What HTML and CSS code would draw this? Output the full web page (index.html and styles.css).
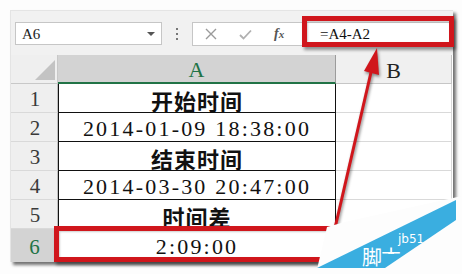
FILE: index.html
```html
<!DOCTYPE html>
<html lang="zh-CN">
<head>
    <meta charset="UTF-8">
    <meta name="viewport" content="width=device-width, initial-scale=1.0">
    <title>时间差 - Excel</title>
    <link rel="stylesheet" href="styles.css">
</head>
<body>
    <div class="page">
        <div class="sheet">
            <div class="toolbar">
                <div class="namebox">
                    <span>A6</span>
                    <i class="caret"></i>
                </div>
                <div class="grip"><i></i><i></i><i></i></div>
                <div class="fbar">
                    <span class="ico">
                        <svg width="12" height="12" viewBox="0 0 12 12"><path d="M1 1 L11 11 M11 1 L1 11" stroke="#9a9a9a" stroke-width="1.4" fill="none"/></svg>
                    </span>
                    <span class="ico">
                        <svg width="13" height="11" viewBox="0 0 13 11"><path d="M1 6 L4.5 9.5 L12 1.5" stroke="#b0b0b0" stroke-width="1.8" fill="none"/></svg>
                    </span>
                    <span class="fx">f<span>x</span></span>
                    <div class="formula">=A4-A2</div>
                </div>
            </div>

            <div class="grid">
                <div class="corner"><i></i></div>
                <div class="colhead sel">A</div>
                <div class="colhead">B</div>

                <div class="rowhead">1</div>
                <div class="cell cjk">开始时间</div>
                <div class="blank"></div>

                <div class="rowhead">2</div>
                <div class="cell num">2014-01-09 18:38:00</div>
                <div class="blank"></div>

                <div class="rowhead">3</div>
                <div class="cell cjk">结束时间</div>
                <div class="blank"></div>

                <div class="rowhead">4</div>
                <div class="cell num">2014-03-30 20:47:00</div>
                <div class="blank"></div>

                <div class="rowhead">5</div>
                <div class="cell cjk">时间差</div>
                <div class="blank"></div>

                <div class="rowhead sel last">6</div>
                <div class="cell num last">2:09:00</div>
                <div class="blank last"></div>
            </div>
        </div>

        <!-- annotations drawn on top of the screenshot -->
        <div class="mark mark-formula"></div>
        <div class="mark mark-row"></div>
        <svg class="arrow" width="462" height="274" viewBox="0 0 462 274">
            <line x1="335" y1="228" x2="372" y2="68" stroke="#d0161c" stroke-width="3"/>
            <polygon points="377,48 364,71 379,75" fill="#d0161c"/>
        </svg>
        <svg class="stamp" width="462" height="274" viewBox="0 0 462 274">
            <defs>
                <clipPath id="band">
                    <polygon points="317,268 456,200 456,220 385,268"/>
                </clipPath>
                <clipPath id="cut">
                    <rect x="380" y="230" width="30" height="24"/>
                </clipPath>
            </defs>
            <polygon points="316,274 318,265 327,227 345,222 462,196 462,274" fill="#fdfdfd"/>
            <polygon points="317,268 456,200 456,220 385,268" fill="#3aaee0"/>
            <g clip-path="url(#band)" fill="#ffffff">
                <text x="398" y="243" class="stamp-en">jb51</text>
                <text x="362" y="265" class="stamp-cn">脚</text>
                <text x="381" y="265" class="stamp-cn" clip-path="url(#cut)">本</text>
            </g>
        </svg>
    </div>
</body>
</html>
```

FILE: styles.css
```css
:root {
    --toolbar-bg: #f1f1f1;
    --head-bg: #efefef;
    --head-sel: #d3d3d3;
    --excel-green: #217346;
    --grid-line: #d9d9d9;
    --mark-red: #d0161c;
}
body {
    margin: 0;
    background: #fdfdfd;
}
.page {
    position: relative;
    width: 462px;
    height: 274px;
    padding: 10px 10px 0 10px;
    box-sizing: border-box;
    overflow: hidden;
}
.sheet {
    width: 442px;
    background: #ffffff;
    border-top: 1px solid #e4e4e4;
    border-left: 1px solid #e4e4e4;
    box-shadow: 3px 3px 3px rgba(0, 0, 0, 0.55);
}
.toolbar {
    height: 44px;
    background: var(--toolbar-bg);
    display: flex;
    align-items: flex-start;
    padding: 11px 0 0 4px;
    box-sizing: border-box;
}
.namebox {
    width: 147px;
    height: 23px;
    box-sizing: border-box;
    background: #ffffff;
    border: 1px solid #c6c6c6;
    display: flex;
    align-items: center;
    justify-content: space-between;
    padding: 1px 6px 0 6px;
    font-family: "Liberation Serif", serif;
    font-size: 15px;
    color: #222;
}
.caret {
    width: 0;
    height: 0;
    border-left: 4px solid transparent;
    border-right: 4px solid transparent;
    border-top: 4px solid #555;
}
.grip {
    width: 30px;
    height: 23px;
    display: flex;
    flex-direction: column;
    align-items: center;
    justify-content: center;
    gap: 3px;
}
.grip i {
    width: 2px;
    height: 2px;
    background: #777;
}
.fbar {
    flex: 1;
    height: 24px;
    box-sizing: border-box;
    background: #ffffff;
    border: 1px solid #c6c6c6;
    border-right: none;
    display: flex;
    align-items: center;
    padding-left: 12px;
}
.ico {
    width: 34px;
    display: flex;
    align-items: center;
}
.fx {
    width: 30px;
    font-family: "Liberation Serif", serif;
    font-style: italic;
    font-weight: bold;
    font-size: 14px;
    color: #555;
    padding-left: 1px;
}
.fx span {
    font-size: 11px;
}
.formula {
    flex: 1;
    padding: 1px 0 0 16px;
    font-family: "Liberation Serif", serif;
    font-size: 15px;
    color: #111;
}
.grid {
    display: grid;
    grid-template-columns: 47px 278px 116px;
    grid-template-rows: 29px repeat(5, 29px) 33px;
}
.corner {
    background: var(--head-bg);
    border-right: 1px solid #c8c8c8;
    border-bottom: 1px solid #c8c8c8;
    position: relative;
}
.corner i {
    position: absolute;
    right: 2px;
    bottom: 3px;
    width: 0;
    height: 0;
    border-left: 20px solid transparent;
    border-bottom: 20px solid #c3c3c3;
}
.colhead {
    background: #f0f0f0;
    border-right: 1px solid #c6c6c6;
    border-bottom: 1px solid #c6c6c6;
    font-family: "Liberation Serif", serif;
    font-size: 22px;
    color: #222;
    display: flex;
    align-items: center;
    justify-content: center;
    padding-top: 3px;
    box-sizing: border-box;
}
.colhead.sel {
    background: var(--head-sel);
    color: var(--excel-green);
    border-right: 1px solid #9c9c9c;
    border-bottom: 2px solid var(--excel-green);
}
.rowhead {
    background: var(--head-bg);
    border-right: 1px solid #bdbdbd;
    border-bottom: 1px solid var(--grid-line);
    font-family: "Liberation Serif", serif;
    font-size: 21px;
    color: #3a3a3a;
    display: flex;
    align-items: center;
    justify-content: center;
    padding: 3px 0 0 2px;
    box-sizing: border-box;
}
.rowhead.sel {
    background: var(--head-sel);
    color: var(--excel-green);
    border-right: 2px solid var(--excel-green);
}
.cell {
    border-left: 1px solid #111;
    border-right: 1px solid #111;
    border-bottom: 1px solid #111;
    color: #111;
    display: flex;
    align-items: center;
    justify-content: center;
    padding-top: 3px;
    box-sizing: border-box;
    white-space: nowrap;
}
.cjk {
    font-family: "Noto Sans CJK SC", sans-serif;
    font-weight: bold;
    font-size: 22px;
    letter-spacing: 1px;
}
.num {
    font-family: "Liberation Serif", serif;
    font-size: 22px;
    letter-spacing: 2.2px;
}
.blank {
    border-right: 1px solid var(--grid-line);
    border-bottom: 1px solid var(--grid-line);
}
.last {
    border-bottom: none;
}
.mark {
    position: absolute;
    border: 5px solid var(--mark-red);
    box-sizing: border-box;
    box-shadow: 2px 3px 3px rgba(0, 0, 0, 0.4), inset 1px 1px 2px rgba(0, 0, 0, 0.2);
}
.mark-formula {
    left: 302px;
    top: 16px;
    width: 152px;
    height: 31px;
}
.mark-row {
    left: 54px;
    top: 226px;
    width: 300px;
    height: 36px;
}
.arrow {
    position: absolute;
    left: 0;
    top: 0;
    filter: drop-shadow(1px 2px 1.5px rgba(0, 0, 0, 0.45));
}
.stamp {
    position: absolute;
    left: 0;
    top: 0;
}
.stamp-en {
    font-family: "DejaVu Sans", sans-serif;
    font-size: 12px;
}
.stamp-cn {
    font-family: "Noto Sans CJK SC", sans-serif;
    font-size: 20px;
}
```
